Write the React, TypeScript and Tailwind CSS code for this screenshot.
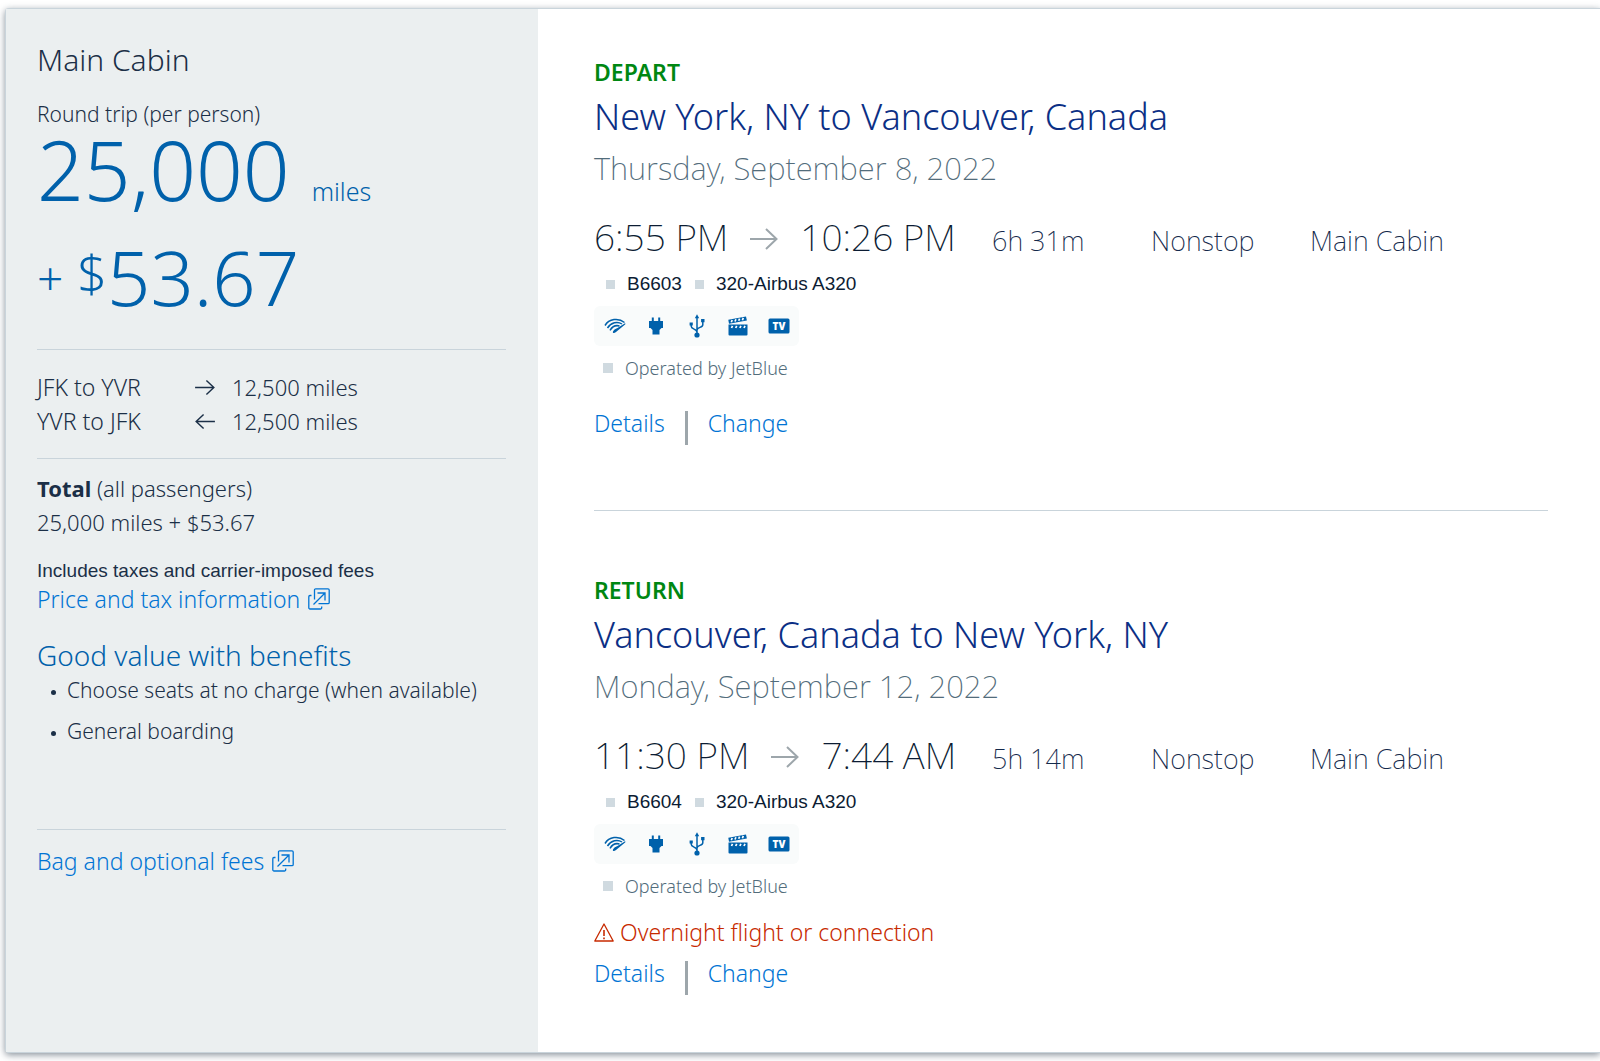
import type { ReactNode } from 'react';

type Flight = {
  label: string;
  route: string;
  date: string;
  departs: string;
  arrives: string;
  duration: string;
  number: string;
  aircraft: string;
  warning?: string;
};

const flights: Flight[] = [
  {
    label: 'DEPART',
    route: 'New York, NY to Vancouver, Canada',
    date: 'Thursday, September 8, 2022',
    departs: '6:55 PM',
    arrives: '10:26 PM',
    duration: '6h 31m',
    number: 'B6603',
    aircraft: '320-Airbus A320',
  },
  {
    label: 'RETURN',
    route: 'Vancouver, Canada to New York, NY',
    date: 'Monday, September 12, 2022',
    departs: '11:30 PM',
    arrives: '7:44 AM',
    duration: '5h 14m',
    number: 'B6604',
    aircraft: '320-Airbus A320',
    warning: 'Overnight flight or connection',
  },
];

const benefits = ['Choose seats at no charge (when available)', 'General boarding'];

function Arrow({ className }: { className: string }) {
  return (
    <svg viewBox="0 0 28 24" fill="none" stroke="currentColor" strokeWidth="2" className={className} aria-hidden="true">
      <path d="M0 12h26M16 2l10.500 10L16 22" />
    </svg>
  );
}

function NewWindowIcon() {
  return (
    <svg viewBox="0 0 22 22" fill="none" stroke="currentColor" strokeWidth="1.300" className="size-[22px]" aria-hidden="true">
      <path d="M6.500 11.500V2a1.200 1.200 0 0 1 1.200-1.200H20A1.200 1.200 0 0 1 21.200 2v12.500a1.200 1.200 0 0 1-1.200 1.200h-9.500" />
      <path d="M3.500 7.500H2A1.200 1.200 0 0 0 .8 8.700v11.100A1.200 1.200 0 0 0 2 21h10.500a1.200 1.200 0 0 0 1.200-1.200v-1.300" />
      <path d="M5.500 16.500 17 5M9.500 5H17v7.500" />
    </svg>
  );
}

function WarningIcon() {
  return (
    <svg viewBox="0 0 20 19" fill="none" stroke="currentColor" strokeWidth="1.300" className="h-[19px] w-5" aria-hidden="true">
      <path d="M10 1 19.200 18H.8Z" strokeLinejoin="round" />
      <path d="M10 7v6M10 14.500v1.800" strokeWidth="1.600" />
    </svg>
  );
}

function WifiIcon() {
  return (
    <svg viewBox="0 0 22 16" fill="none" stroke="currentColor" strokeWidth="1.500" className="h-4 w-[22px]" aria-hidden="true">
      <path d="M1 7.500C5 .8 14.500-.5 20.500 4.500" />
      <path d="M3.500 10C7 4.300 13.500 3 18 6" />
      <path d="M6 12.300C8.500 8.200 12 7 15.500 8" />
      <path d="M9 14.800c-.6-1.500 1.500-3.800 4.500-4.800L21 5.200c.6.300.5.800.1 1.200L12 14c-1 .9-2.400 1.400-3 .8Z" fill="currentColor" stroke="none" />
    </svg>
  );
}

function PlugIcon() {
  return (
    <svg viewBox="0 0 16 18" fill="currentColor" className="h-[18px] w-4" aria-hidden="true">
      <path d="M3.800.5h2V4h4.400V.5h2V4H15v7h-1.500L11.500 13v4.500h-7V13L2.500 11H1V4h2.800Z" />
    </svg>
  );
}

function UsbIcon() {
  return (
    <svg viewBox="0 0 16 24" fill="none" stroke="currentColor" strokeWidth="1.500" className="h-6 w-4" aria-hidden="true">
      <path d="M8 3v17M2.200 11v1.200c0 3.300 5.800 2.500 5.800 6M13.800 7.500v3.200c0 3.300-5.800 2-5.800 5.500" />
      <path d="M8 .3 10.200 4.200H5.800ZM.6 8.500h3.200v3H.6Z M12.100 5h3.400v3.300h-3.400Z" fill="currentColor" stroke="none" />
      <circle cx="8" cy="21" r="2.600" fill="currentColor" stroke="none" />
    </svg>
  );
}

function MovieIcon() {
  return (
    <svg viewBox="0 0 20 20" fill="currentColor" className="size-5" aria-hidden="true">
      <path d="M.5 8.500h19v10a1 1 0 0 1-1 1h-17a1 1 0 0 1-1-1Z" />
      <path d="M.3 3.800 18 .6l.9 4L1 7.800Z" />
      <path d="m3.300 6.200.9-2.200M7 5.500l.9-2.200M10.700 4.800l.9-2.200M14.400 4.200l.9-2.300M3.500 12l1-2.200M7.700 12l1-2.200M11.900 12l1-2.200M16 12l1-2.200" stroke="#fff" strokeWidth="1.700" />
    </svg>
  );
}

function TvIcon() {
  return (
    <svg viewBox="0 0 22 16" className="h-4 w-[22px]" aria-hidden="true">
      <rect x="0.500" y="0.500" width="21" height="15" rx="1.500" fill="currentColor" />
      <text x="11" y="11.500" textAnchor="middle" fontSize="10" fontWeight="800" fill="#fff" className="font-['Open_Sans',sans-serif]">
        TV
      </text>
    </svg>
  );
}

function Divider({ className }: { className: string }) {
  return <hr className={`border-t border-[#c9d4db] ${className}`} />;
}

function ExternalLink({ children }: { children: ReactNode }) {
  return (
    <a href="#" className="flex w-fit items-center gap-2 text-[23px] leading-7 text-[#0074d4]">
      {children}
      <NewWindowIcon />
    </a>
  );
}

function Leg({ from, to, arrow }: { from: string; to: string; arrow: string }) {
  return (
    <li className="flex items-center">
      <span className="w-[157px] text-[23px]">
        {from} to {to}
      </span>
      <Arrow className={`h-[17px] w-[22px] ${arrow}`} />
      <span className="ml-4">12,500 miles</span>
    </li>
  );
}

function PriceSummary() {
  return (
    <aside className="w-[532px] shrink-0 bg-[#ebeff0] pt-[33px] pr-8 pl-[31px] text-[#1b2f47]">
      <h2 className="text-[30px] leading-9">Main Cabin</h2>
      <p className="mt-[22px] text-[21px] leading-7">Round trip (per person)</p>
      <p className="mt-px flex items-baseline gap-[22px] text-[82px] leading-[80px] text-[#0061ab]">
        25,000
        <span className="text-[25px] leading-8">miles</span>
      </p>
      <p className="mt-7 flex text-[76px] leading-[80px] text-[#0061ab]">
        <span className="text-[46px]">+</span>
        <span className="ml-[14px] text-[52px] leading-[72px]">$</span>
        53.67
      </p>

      <Divider className="mt-8" />
      <ul className="mt-5 text-[22px] leading-[34px]">
        <Leg from="JFK" to="YVR" arrow="" />
        <Leg from="YVR" to="JFK" arrow="rotate-180" />
      </ul>
      <Divider className="mt-5" />

      <p className="mt-3 text-[22px] leading-[34px]">
        <strong className="font-bold">Total</strong> (all passengers)
        <br />
        25,000 miles + $53.67
      </p>
      <p className="mt-5 mb-[2px] font-['Liberation_Sans',Arial,sans-serif] text-[19px] leading-6 font-normal">
        Includes taxes and carrier-imposed fees
      </p>
      <ExternalLink>Price and tax information</ExternalLink>

      <h3 className="mt-6 text-[28px] leading-9 text-[#0061ab]">Good value with benefits</h3>
      <ul className="mt-[3px] flex flex-col gap-[13px] text-[21px] leading-7">
        {benefits.map((benefit) => (
          <li key={benefit} className="flex items-center">
            <span className="mt-1 mr-[11px] ml-[14px] size-[5px] rounded-full bg-current" />
            {benefit}
          </li>
        ))}
      </ul>

      <Divider className="mt-[84px] mb-[17px]" />
      <ExternalLink>Bag and optional fees</ExternalLink>
    </aside>
  );
}

function FlightCard({ flight }: { flight: Flight }) {
  return (
    <article>
      <p className="text-[23px] leading-7 font-semibold text-[#008712]">{flight.label}</p>
      <h2 className="mt-[9px] text-[36px] leading-[44px] text-[#0b2f85]">{flight.route}</h2>
      <p className="mt-[9px] text-[31px] leading-10 font-extralight text-[#526c7b]">{flight.date}</p>

      <div className="mt-[25px] grid grid-cols-[398fr_159fr_397fr] items-baseline text-[27px] leading-[48px] font-extralight text-[#13294b]">
        <div className="flex items-center gap-[22px] text-[37px] text-[#0c1c33]">
          <time>{flight.departs}</time>
          <Arrow className="mt-1 h-6 w-7 text-[#9da6ab]" />
          <time>{flight.arrives}</time>
        </div>
        <span>{flight.duration}</span>
        <div className="grid grid-cols-[159fr_238fr]">
          <span>Nonstop</span>
          <span>Main Cabin</span>
        </div>
      </div>

      <div className="mt-[7px] flex items-center pl-3 font-['Liberation_Sans',Arial,sans-serif] text-[19px] leading-6 font-normal text-[#0c1c33]">
        <span className="mr-3 size-[9px] bg-[#d0dae0]" />
        {flight.number}
        <span className="mr-3 ml-[13px] size-[9px] bg-[#d0dae0]" />
        {flight.aircraft}
      </div>

      <div className="mt-[10px] flex h-10 w-fit items-center rounded-md bg-[#f9fbfb] text-[#0061ab]">
        {[WifiIcon, PlugIcon, UsbIcon, MovieIcon, TvIcon].map((Icon, i) => (
          <span key={i} className="flex w-[41px] justify-center">
            <Icon />
          </span>
        ))}
      </div>

      <p className="mt-2 flex items-center gap-3 pl-[9px] text-[18px] leading-7 text-[#526c7b]">
        <span className="size-[10px] bg-[#d0dae0]" />
        Operated by JetBlue
      </p>

      {flight.warning && (
        <p className="mt-4 -mb-4 flex items-center gap-[6px] text-[23px] leading-8 text-[#c72a00]">
          <WarningIcon />
          {flight.warning}
        </p>
      )}

      <div className="mt-[27px] flex items-start text-[23px] leading-7 text-[#0074d4]">
        <button type="button">Details</button>
        <span className="mx-5 mt-[2px] h-[34px] w-[3px] bg-[#9da6ab]" />
        <button type="button">Change</button>
      </div>
    </article>
  );
}

export default function App() {
  return (
    <main className="flex min-h-screen bg-white pt-2 pb-2 pl-[5px] font-['Noto_Sans','Open_Sans',sans-serif] font-light">
      <div className="flex flex-1 rounded-l border border-r-0 border-[#c9d4db] bg-white shadow-[0_2px_7px_rgba(60,75,90,0.6)]">
        <PriceSummary />
        <section className="flex-1 pt-[49px] pr-[52px] pl-14">
          <FlightCard flight={flights[0]} />
          <Divider className="my-[65px]" />
          <FlightCard flight={flights[1]} />
        </section>
      </div>
    </main>
  );
}
